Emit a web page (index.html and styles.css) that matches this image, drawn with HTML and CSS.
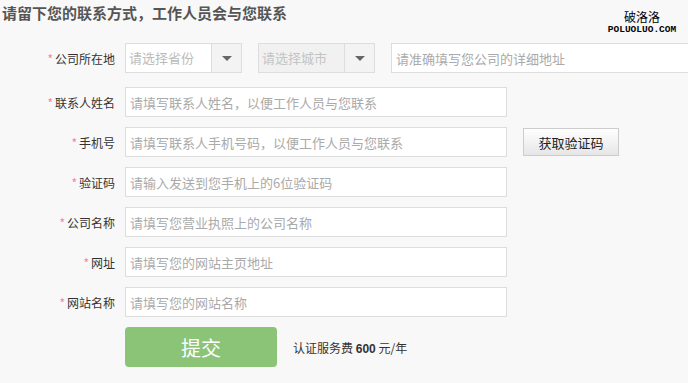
FILE: index.html
```html
<!DOCTYPE html>
<html>
<head lang="zh">
    <meta charset="UTF-8">
    <title>联系方式</title>
    <link rel="stylesheet" href="styles.css">
</head>
<body>
<div class="page">
    <h1 class="title">请留下您的联系方式，工作人员会与您联系</h1>
    <div class="mark">
        <div class="mark-cn">破洛洛</div>
        <div class="mark-en">POLUOLUO.COM</div>
    </div>

    <form class="form">
        <div class="row first">
            <label class="label"><i>*</i>公司所在地</label>
            <div class="select">
                <span class="select-text">请选择省份</span>
                <span class="select-arrow"></span>
            </div>
            <div class="select disabled">
                <span class="select-text">请选择城市</span>
                <span class="select-arrow"></span>
            </div>
            <input class="input wide" type="text" placeholder="请准确填写您公司的详细地址">
        </div>
        <div class="row">
            <label class="label"><i>*</i>联系人姓名</label>
            <input class="input" type="text" placeholder="请填写联系人姓名，以便工作人员与您联系">
        </div>
        <div class="row">
            <label class="label"><i>*</i>手机号</label>
            <input class="input" type="text" placeholder="请填写联系人手机号码，以便工作人员与您联系">
            <button class="btn-code" type="button">获取验证码</button>
        </div>
        <div class="row">
            <label class="label"><i>*</i>验证码</label>
            <input class="input" type="text" placeholder="请输入发送到您手机上的6位验证码">
        </div>
        <div class="row">
            <label class="label"><i>*</i>公司名称</label>
            <input class="input" type="text" placeholder="请填写您营业执照上的公司名称">
        </div>
        <div class="row">
            <label class="label"><i>*</i>网址</label>
            <input class="input" type="text" placeholder="请填写您的网站主页地址">
        </div>
        <div class="row">
            <label class="label"><i>*</i>网站名称</label>
            <input class="input" type="text" placeholder="请填写您的网站名称">
        </div>
        <div class="row submit-row">
            <span class="label"></span>
            <button class="btn-submit" type="button">提交</button>
            <span class="fee">认证服务费 <b>600</b> 元/年</span>
        </div>
    </form>
</div>
</body>
</html>
```

FILE: styles.css
```css
* {
    margin: 0;
    padding: 0;
    box-sizing: border-box;
}
html, body {
    height: 100%;
    overflow: hidden;
}
body {
    background: #f8f8f8;
    font-family: "Noto Sans CJK SC", "Liberation Sans", sans-serif;
    font-size: 12px;
    color: #333;
}
.page {
    position: relative;
    width: 688px;
    height: 383px;
    overflow: hidden;
}
.title {
    font-size: 15px;
    line-height: 18px;
    font-weight: bold;
    color: #555;
    padding: 4px 0 0 2px;
}

/* watermark */
.mark {
    position: absolute;
    top: 10px;
    left: 606px;
    width: 72px;
    text-align: center;
    color: #000;
}
.mark-cn {
    font-size: 12px;
    line-height: 14px;
}
.mark-en {
    font-family: "Liberation Mono", "DejaVu Sans Mono", monospace;
    font-size: 9.5px;
    line-height: 11px;
    font-weight: bold;
}

.form {
    padding-top: 21px;
}
.row {
    display: flex;
    align-items: center;
    height: 30px;
    margin-bottom: 10px;
    white-space: nowrap;
}
.row.first {
    margin-bottom: 14px;
}
.label {
    width: 115px;
    flex: none;
    text-align: right;
    margin-right: 10px;
    font-size: 12px;
    color: #333;
}
.label i {
    font-style: normal;
    color: #e88;
    margin-right: 2px;
}
.input {
    width: 382px;
    height: 30px;
    flex: none;
    border: 1px solid #ddd;
    background: #fff;
    padding: 0 4px;
    font-family: inherit;
    font-size: 13px;
    outline: none;
}
.input::placeholder {
    color: #aaa;
}
.input.wide {
    width: 310px;
}

.select {
    display: flex;
    width: 117px;
    height: 30px;
    flex: none;
    border: 1px solid #ddd;
    background: #fff;
    margin-right: 16px;
}
.select-text {
    flex: 1;
    padding-left: 3px;
    line-height: 28px;
    font-size: 13px;
    color: #bbb;
}
.select-arrow {
    width: 30px;
    border-left: 1px solid #ddd;
    background: #f3f3f3;
    position: relative;
}
.select-arrow::after {
    content: "";
    position: absolute;
    left: 10px;
    top: 12px;
    border-left: 5px solid transparent;
    border-right: 5px solid transparent;
    border-top: 5px solid #666;
}
.select.disabled {
    background: #f1f1f1;
}
.select.disabled .select-text {
    color: #c4c4c4;
}

.btn-code {
    margin-left: 16px;
    width: 96px;
    height: 28px;
    border: 1px solid #ccc;
    background: linear-gradient(#fff, #e6e6e6);
    font-family: inherit;
    font-size: 13px;
    color: #222;
}

.submit-row {
    height: 40px;
}
.btn-submit {
    width: 152px;
    height: 40px;
    border: none;
    border-radius: 4px;
    background: #8bc477;
    color: #fff;
    font-family: inherit;
    font-size: 20px;
}
.fee {
    margin-left: 16px;
    font-size: 12px;
    color: #333;
}
.fee b {
    font-family: "Liberation Sans", sans-serif;
}
```
